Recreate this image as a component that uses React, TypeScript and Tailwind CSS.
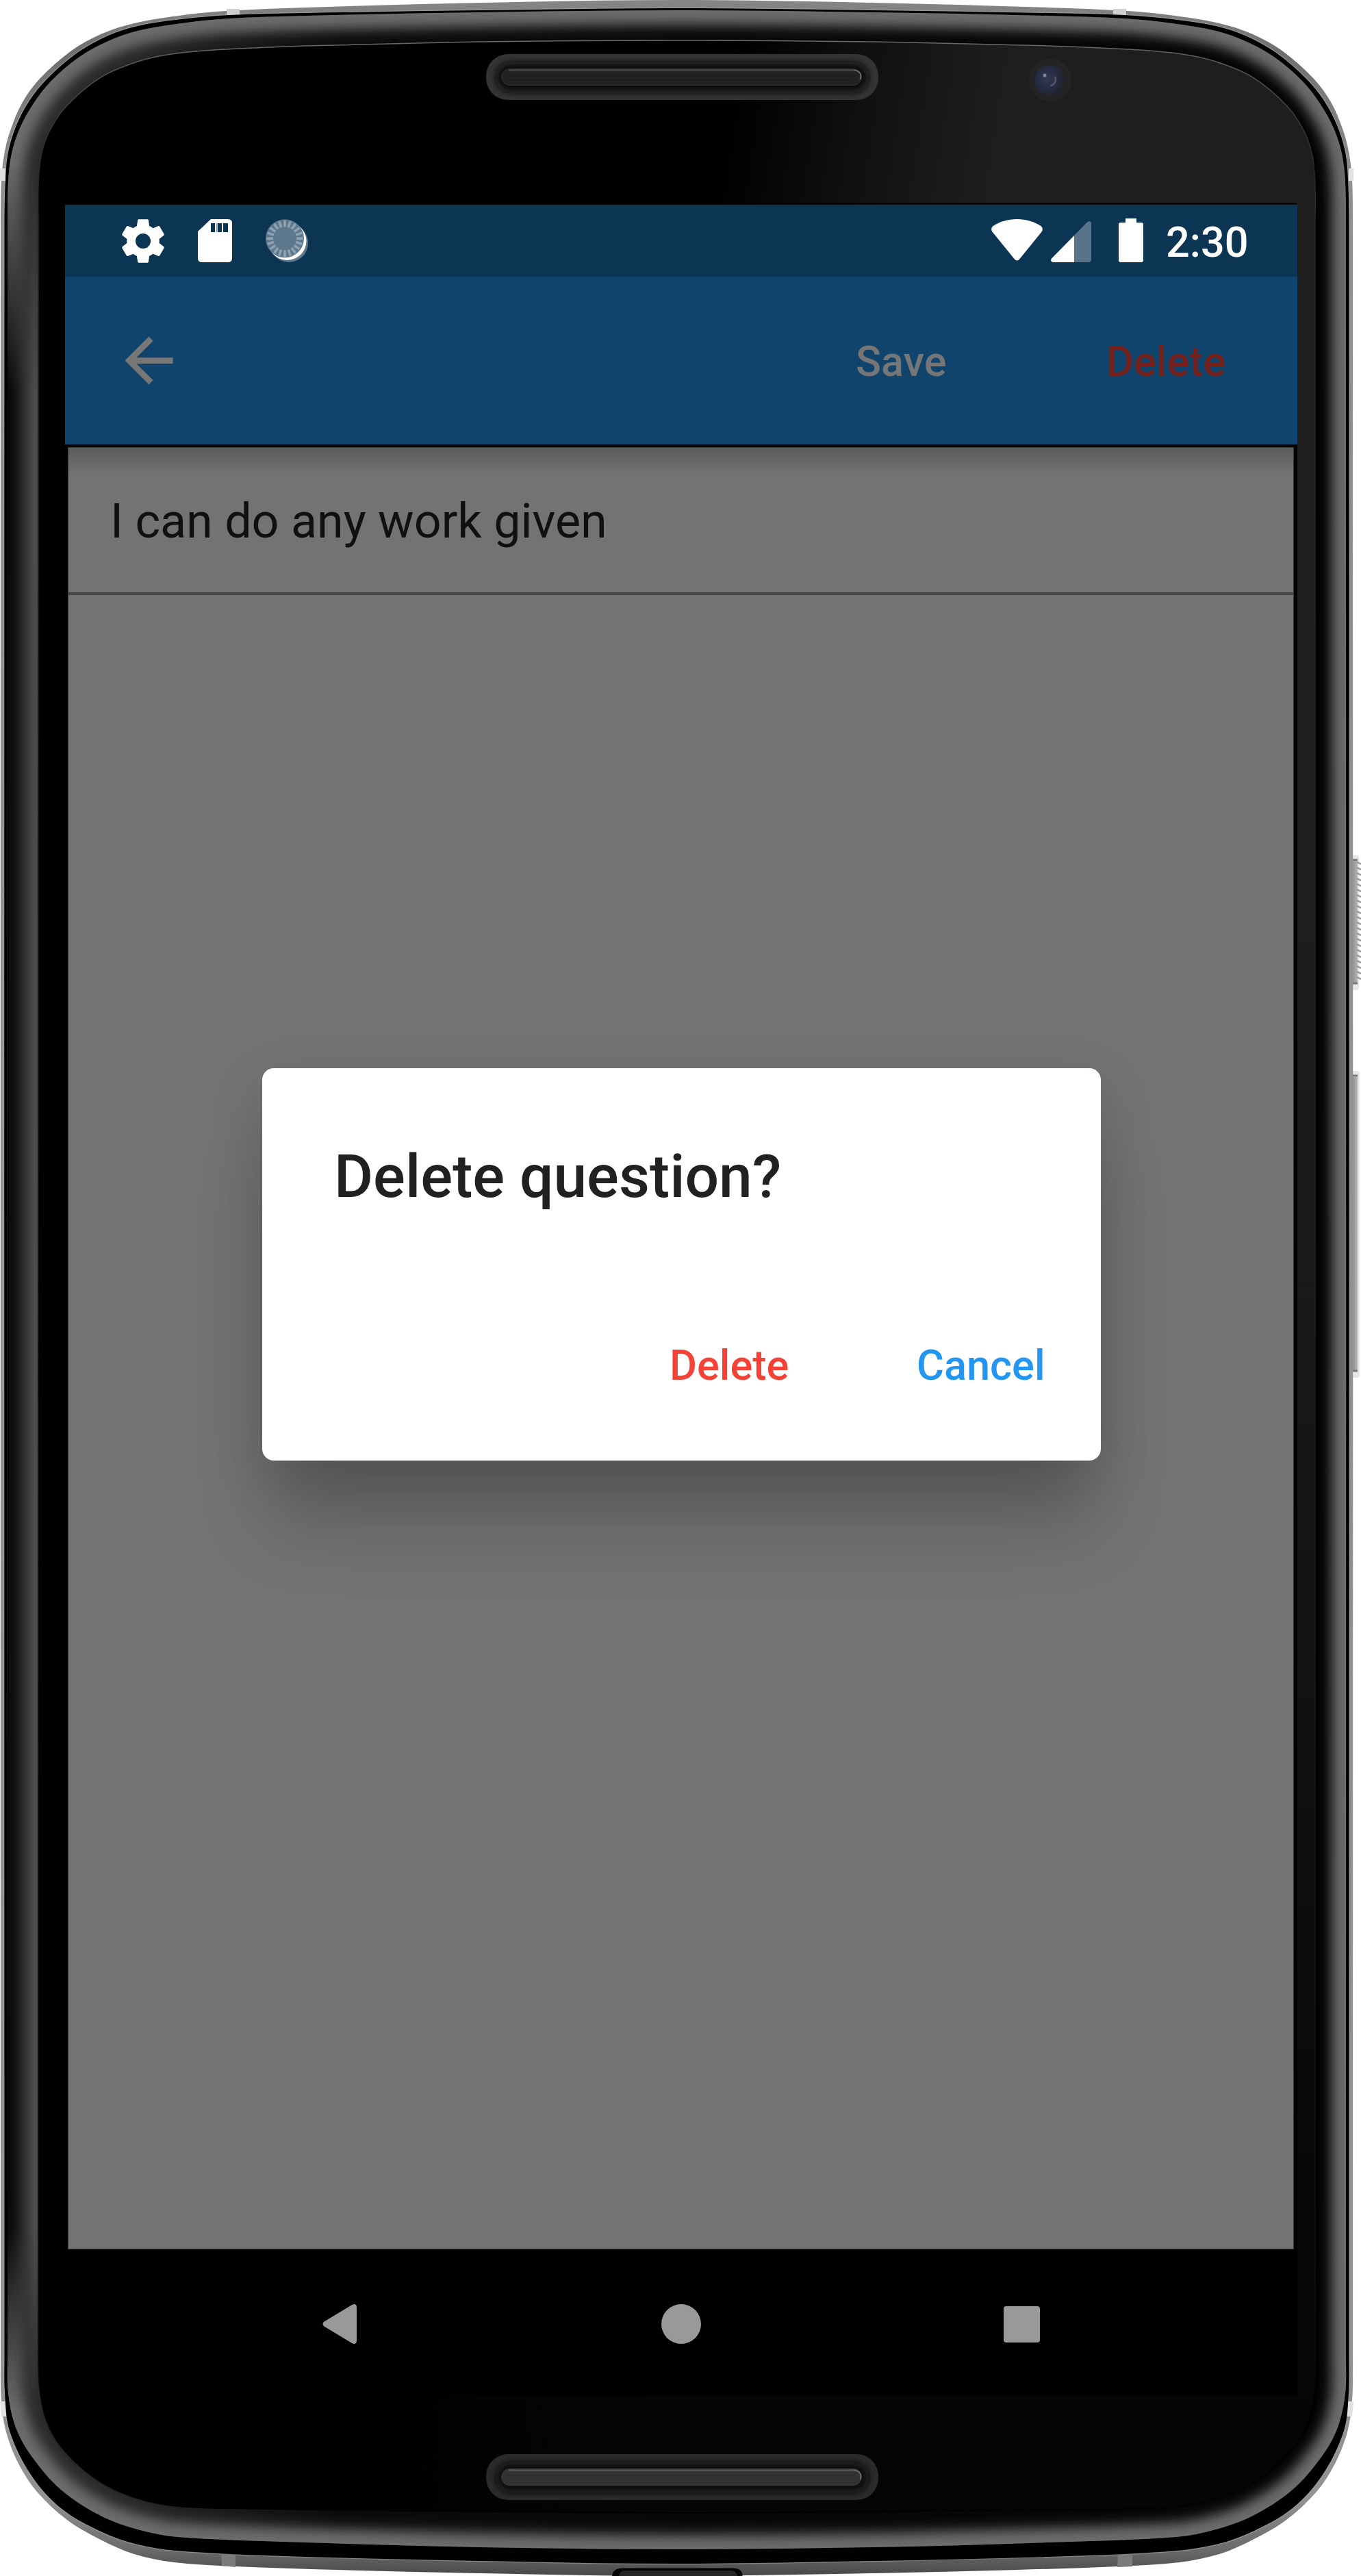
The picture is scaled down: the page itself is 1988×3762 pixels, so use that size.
import React from 'react';

type Point = [number, number];

const CENTER = 988.5;

/** Mirrors the left-hand contour around the device axis and joins it with a smooth closed curve. */
function contour(left: Point[]): string {
  const right = left
    .filter(([x]) => x !== CENTER)
    .map(([x, y]): Point => [2 * CENTER - x, y])
    .reverse();
  const pts = [...left, ...right];
  const n = pts.length;
  let d = `M${pts[0][0]} ${pts[0][1]}`;
  for (let i = 0; i < n; i++) {
    const p0 = pts[(i - 1 + n) % n];
    const p1 = pts[i];
    const p2 = pts[(i + 1) % n];
    const p3 = pts[(i + 2) % n];
    const len = Math.hypot(p2[0] - p1[0], p2[1] - p1[1]);
    const a = Math.hypot(p2[0] - p0[0], p2[1] - p0[1]) || 1;
    const b = Math.hypot(p3[0] - p1[0], p3[1] - p1[1]) || 1;
    const c1x = p1[0] + ((p2[0] - p0[0]) / a) * (len / 3);
    const c1y = p1[1] + ((p2[1] - p0[1]) / a) * (len / 3);
    const c2x = p2[0] - ((p3[0] - p1[0]) / b) * (len / 3);
    const c2y = p2[1] - ((p3[1] - p1[1]) / b) * (len / 3);
    d += `C${c1x.toFixed(1)} ${c1y.toFixed(1)} ${c2x.toFixed(1)} ${c2y.toFixed(1)} ${p2[0]} ${p2[1]}`;
  }
  return d + 'Z';
}

const SHELL = contour([
  [CENTER, 0], [700, 4], [446, 11], [330, 16], [268, 22], [196, 34], [147, 50], [103, 75], [58, 115],
  [33, 149], [16, 188], [7, 221], [2, 262], [1, 330], [1, 3440], [2, 3507], [9, 3552], [27, 3598],
  [54, 3639], [98, 3680], [147, 3709], [196, 3730], [254, 3742], [344, 3748], [491, 3753], [700, 3758], [CENTER, 3762],
]);

const RIM = contour([
  [CENTER, 12], [700, 15], [446, 19], [335, 22], [265, 28], [201, 38], [158, 52], [113, 77], [69, 115],
  [43, 147], [24, 183], [12, 222], [8, 262], [6.5, 330], [6.5, 3440], [7, 3495], [14, 3550], [45, 3614],
  [89, 3663], [147, 3697], [201, 3716], [268, 3726], [446, 3734], [700, 3740], [CENTER, 3744],
]);

const BAND = contour([
  [CENTER, 15], [700, 18], [446, 23], [335, 27], [265, 34], [201, 45], [158, 60], [116, 83], [75, 118],
  [49, 151], [29, 187], [17, 224], [12, 265], [11, 330], [11, 3440], [12, 3495], [23, 3545], [46, 3587],
  [89, 3636], [147, 3674], [201, 3694], [259, 3705], [446, 3713], [700, 3720], [CENTER, 3723],
]);

const GLASS = contour([
  [CENTER, 59], [700, 61], [446, 67], [312, 73], [250, 79], [201, 90], [147, 113], [96, 156], [71, 194],
  [60, 228], [56, 270], [56, 330], [56, 3440], [58, 3490], [67, 3533], [89, 3573], [134, 3616], [179, 3641],
  [241, 3658], [312, 3663], [700, 3668], [CENTER, 3670],
]);

function SpeakerSlot({ y, bright }: { y: number; bright?: boolean }) {
  return (
    <g transform={`translate(710 ${y})`}>
      <rect width="573" height="67" rx="32" fill={bright ? '#2b2b2b' : '#343434'} />
      <rect x="14" y="12" width="545" height="44" rx="22" fill="#080808" filter="url(#soft6)" />
      <rect x="22.5" y="21.5" width="526" height="24" rx="12" fill={bright ? '#323232' : '#222'} stroke={bright ? '#3c3c3c' : '#333'} />
      <path d="M33 23.5H538" stroke={bright ? '#5a5a5a' : '#4c4c4c'} strokeWidth="2" />
      <path d="M538 23.5C547 25 549 31 546 37" stroke="#777" strokeWidth="1.5" fill="none" />
      <path d="M30 31H540M34 38H536" stroke={bright ? '#2a2a2a' : '#1b1b1b'} />
    </g>
  );
}

function SideKey({ y, height, ridged }: { y: number; height: number; ridged?: boolean }) {
  const ridges = ridged ? Array.from({ length: Math.floor((height - 16) / 8) }, (_, i) => y + 10 + i * 8) : [];
  return (
    <g>
      <rect x="1970" y={y} width={ridged ? 15 : 16} height={height} rx="4" fill="#e6e6e6" />
      <rect x="1974" y={y + 9} width="9" height={height - 20} fill="url(#key)" />
      <path d={`M1976 ${y + 7}h7M1976 ${y + height - 10}h7`} stroke="#777" strokeWidth="3" />
      {ridges.map((ry) => (
        <path key={ry} d={`M1982 ${ry}l6 3`} stroke="#9c9c9c" strokeWidth="2.5" />
      ))}
    </g>
  );
}

function Chassis() {
  return (
    <svg className="col-start-1 row-start-1" width="1988" height="3762" viewBox="0 0 1988 3762" fill="none" aria-hidden="true">
      <defs>
        <filter id="soft6" x="-20%" y="-50%" width="140%" height="200%"><feGaussianBlur stdDeviation="5" /></filter>
        <filter id="soft14" filterUnits="userSpaceOnUse" x="-60" y="-60" width="2108" height="3882"><feGaussianBlur stdDeviation="9" /></filter>
        <filter id="soft20" filterUnits="userSpaceOnUse" x="-60" y="-60" width="2108" height="3882"><feGaussianBlur stdDeviation="16" /></filter>
        <clipPath id="bandClip"><path d={BAND} /></clipPath>
        <linearGradient id="metal" x1="0" y1="0" x2="0" y2="1">
          <stop offset="0" stopColor="#858785" /><stop offset=".02" stopColor="#6f6f6f" />
          <stop offset=".07" stopColor="#8e918f" /><stop offset=".97" stopColor="#929292" />
          <stop offset=".99" stopColor="#6a6a6a" /><stop offset="1" stopColor="#484848" />
        </linearGradient>
        <linearGradient id="key"><stop stopColor="#858585" /><stop offset="1" stopColor="#b8b8b8" /></linearGradient>
        <linearGradient id="leftSide" gradientUnits="userSpaceOnUse" x1="11" y1="0" x2="56" y2="0">
          <stop stopColor="#070707" /><stop offset=".25" stopColor="#141414" /><stop offset=".88" stopColor="#4d4d4d" /><stop offset="1" stopColor="#454545" />
        </linearGradient>
        <linearGradient id="sideFade" gradientUnits="userSpaceOnUse" x1="0" y1="240" x2="0" y2="3520">
          <stop stopColor="#fff" stopOpacity="0" /><stop offset=".1" stopColor="#fff" /><stop offset=".92" stopColor="#fff" /><stop offset="1" stopColor="#fff" stopOpacity="0" />
        </linearGradient>
        <mask id="sideMask" maskUnits="userSpaceOnUse" x="0" y="200" width="100" height="3400"><rect y="200" width="100" height="3400" fill="url(#sideFade)" /></mask>
        <linearGradient id="bandBase" gradientUnits="userSpaceOnUse" x1="0" y1="0" x2="1977" y2="0">
          <stop stopColor="#2c2c2c" /><stop offset=".1" stopColor="#272727" /><stop offset=".25" stopColor="#0b0b0b" /><stop offset=".9" stopColor="#040404" /><stop offset="1" stopColor="#000" />
        </linearGradient>
        <linearGradient id="sheenX" gradientUnits="userSpaceOnUse" x1="1090" y1="0" x2="1480" y2="60">
          <stop stopColor="#000" /><stop offset=".5" stopColor="#111" /><stop offset="1" stopColor="#1e1e1e" />
        </linearGradient>
        <linearGradient id="sheenY" x1="0" y1="0" x2="0" y2="1">
          <stop stopColor="#000" stopOpacity="0" /><stop offset=".35" stopColor="#000" stopOpacity="0" /><stop offset=".6" stopColor="#000" stopOpacity=".3" /><stop offset=".88" stopColor="#000" stopOpacity=".76" /><stop offset="1" stopColor="#000" stopOpacity=".85" />
        </linearGradient>
        <linearGradient id="edge" gradientUnits="userSpaceOnUse" x1="0" y1="60" x2="0" y2="3670">
          <stop stopColor="#6a6a6a" /><stop offset=".015" stopColor="#4c4c4c" /><stop offset=".05" stopColor="#2a2a2a" /><stop offset=".9" stopColor="#111" /><stop offset="1" stopColor="#000" />
        </linearGradient>
        <radialGradient id="lens" cx=".42" cy=".42" r=".6">
          <stop stopColor="#34384e" /><stop offset=".55" stopColor="#272c45" /><stop offset="1" stopColor="#212229" />
        </radialGradient>
      </defs>

      <SideKey y={1249} height={197} ridged />
      <SideKey y={1564} height={448} />

      <path d={SHELL} fill="url(#metal)" />
      <path d={RIM} stroke="#a8a8a8" strokeOpacity=".55" strokeWidth="2.5" />
      <path d="M331 13h19v16h-19zM1626 13h19v16h-19z" fill="#cfcfcf" />
      <path d="M0 246h8v18H0zM1970 246h7v18h-7z" fill="#e2e2e2" />
      <path d="M0 3507h8l2 22H2zM1977 3507h-8l-2 22h8z" fill="#e2e2e2" />
      <path d="M323 3728l21 1v20l-20-2zM1633 3729l21-1v20l-22 1z" fill="#7b7b7b" />
      <path d={RIM} fill="#000" />
      <g clipPath="url(#bandClip)">
        <path d={BAND} fill="url(#bandBase)" />
        <path d={BAND} stroke="#777" strokeWidth="38" filter="url(#soft14)" />
        <path d={BAND} stroke="#555" strokeOpacity=".45" strokeWidth="30" filter="url(#soft20)" />
        <rect x="8" y="230" width="50" height="3300" fill="url(#leftSide)" mask="url(#sideMask)" />
      </g>
      <path d={GLASS} fill="url(#sheenX)" />
      <path d={GLASS} fill="url(#sheenY)" />
      <path d={GLASS} stroke="url(#edge)" strokeWidth="1.5" />

      <SpeakerSlot y={79} />
      <SpeakerSlot y={3584} bright />

      <circle cx="1534" cy="117" r="31" fill="#242424" />
      <ellipse cx="1533" cy="118" rx="22" ry="23" fill="url(#lens)" />
      <path d="M1541 112a9 9 0 0 1-7 13" stroke="#53566a" strokeWidth="2.5" />
      <circle cx="1526" cy="110" r="2.5" fill="#7789a3" />

      <path d="M894 3762C895 3754 900 3750.500 910 3750.500H1070C1080 3750.500 1084 3754 1084.500 3762Z" fill="#050505" />
      <path d="M904 3762q1-8 8-8H1067q9 0 10 8Z" fill="#252525" />
      <path d="M95 297.500H1894" stroke="#000" strokeWidth="2" />
    </svg>
  );
}

function GearIcon() {
  return (
    <svg width="76" height="76" viewBox="0 0 24 24" fill="#fff">
      <path d="M19.430 12.980c.04-.32.07-.64.07-.98s-.03-.66-.07-.98l2.110-1.650c.19-.15.24-.42.12-.64l-2-3.460c-.12-.22-.39-.3-.61-.22l-2.490 1c-.52-.4-1.080-.73-1.690-.98l-.38-2.650C14.460 2.180 14.250 2 14 2h-4c-.25 0-.46.18-.49.42l-.38 2.650c-.61.25-1.170.59-1.690.98l-2.490-1c-.23-.09-.49 0-.61.22l-2 3.460c-.13.22-.07.49.12.64l2.110 1.650c-.04.32-.07.65-.07.98s.03.66.07.98l-2.110 1.650c-.19.15-.24.42-.12.64l2 3.460c.12.22.39.3.61.22l2.490-1c.52.4 1.080.73 1.690.98l.38 2.650c.03.24.24.42.49.42h4c.25 0 .46-.18.49-.42l.38-2.650c.61-.25 1.170-.59 1.690-.98l2.490 1c.23.09.49 0 .61-.22l2-3.460c.12-.22.07-.49-.12-.64l-2.110-1.650zM12 15.500c-1.930 0-3.500-1.570-3.500-3.500s1.570-3.500 3.500-3.500 3.500 1.570 3.500 3.500-1.570 3.500-3.500 3.500z" />
    </svg>
  );
}

function SdCardIcon() {
  return (
    <svg width="50" height="63" viewBox="0 0 50 63">
      <path d="M19 0H44q6 0 6 6V57q0 6-6 6H6q-6 0-6-6V18z" fill="#fff" />
      <path d="M19 6h6v13h-6zM29 6h6v13h-6zM37 6h7v13h-7z" fill="#0c3453" />
      <path d="M27 6h1.500v13H27z" fill="#7d93a3" />
    </svg>
  );
}

function SyncIcon() {
  const ticks = Array.from({ length: 20 }, (_, i) => i * 18);
  return (
    <svg width="63" height="64" viewBox="0 0 63 64">
      <circle cx="34" cy="35" r="28" fill="#5d788d" />
      <circle cx="31.500" cy="32" r="28" fill="#fff" />
      <circle cx="28" cy="28.300" r="28" fill="#5d788d" />
      {ticks.map((deg) => (
        <path key={deg} d="M45 28.300H54.500" stroke="#8fa2b1" strokeWidth="3.600" transform={`rotate(${deg} 28 28.300)`} />
      ))}
    </svg>
  );
}

function StatusBar() {
  return (
    <div className="flex h-[105px] bg-[#0c3453] text-white">
      <div className="flex pl-[76px] pt-[15px]">
        <GearIcon />
        <div className="ml-[42px] mt-[6px]"><SdCardIcon /></div>
        <div className="ml-[49px] mt-[6px]"><SyncIcon /></div>
      </div>
      <div className="ml-auto flex pt-[20px]">
        <svg width="75" height="61" viewBox="0 0 75 61" className="mt-px">
          <path d="M2 10.500C22 -3.500 53 -3.500 73 10.500Q76 13.500 74 18L41.500 58Q37.500 63 33.500 58L1 18Q-1 13.500 2 10.500Z" fill="#fff" />
        </svg>
        <svg width="59" height="60" viewBox="0 0 59 60" className="ml-[12px] mt-[4px]">
          <path d="M34 21L53 1.500Q59 -2 59 4V56Q59 60 55 60H34Z" fill="#59748a" />
          <path d="M34 21V60H3Q-1.500 59 1 54.500Z" fill="#fff" />
        </svg>
        <svg width="36" height="64" viewBox="0 0 36 64" className="ml-[40px]">
          <path d="M10 0H26V6H33q3 0 3 3V61q0 3-3 3H3q-3 0-3-3V9q0-3 3-3h7z" fill="#fff" />
        </svg>
        <span className="ml-[33px] w-[192px] text-[61.250px] font-medium leading-[70px]">2:30</span>
      </div>
    </div>
  );
}

function AppBar() {
  return (
    <header className="flex h-[245px] items-center bg-[#10446d] text-[61.250px] font-medium leading-[72px]">
      <svg width="105" height="105" viewBox="0 0 24 24" fill="#777" className="ml-[70px]">
        <path d="M20 11H7.830l5.590-5.590L12 4l-8 8 8 8 1.410-1.410L7.830 13H20v-2z" />
      </svg>
      <button className="ml-auto w-[366px] pt-[2px] text-left text-[#767676]">Save</button>
      <button className="w-[279px] pt-[2px] text-left text-[#731f1a]">Delete</button>
    </header>
  );
}

function NavigationBar() {
  return (
    <nav className="flex h-[214px] bg-black pt-[80px]">
      <svg width="50" height="58" viewBox="0 0 50 58" fill="#999" className="ml-[376px]">
        <path d="M43 1Q50 -2 50 5V53Q50 60 43 57L2.500 32.500Q-1.500 29 2.500 25.500Z" />
      </svg>
      <div className="ml-[445px] h-[58px] w-[58px] rounded-full bg-[#999]" />
      <div className="ml-[442px] mt-[3px] h-[53px] w-[53px] rounded-[4px] bg-[#999]" />
    </nav>
  );
}

function DeleteDialog() {
  return (
    <div
      role="dialog"
      className="absolute left-[288px] top-[1261px] flex h-[573px] w-[1225px] flex-col rounded-[17px] bg-white pl-[105px] pt-[108px] shadow-[0_105px_110px_-15px_rgba(0,0,0,0.2),0_25px_80px_rgba(0,0,0,0.12)]"
    >
      <h2 className="text-[87.500px] font-medium leading-[100px] text-[#212121]">Delete question?</h2>
      <div className="mt-[190px] flex justify-end text-[61.250px] font-medium leading-[72px]">
        <button className="w-[361px] text-left text-[#f44336]">Delete</button>
        <button className="w-[269px] text-left text-[#2196f3]">Cancel</button>
      </div>
    </div>
  );
}

export default function App() {
  return (
    <div className="grid h-[3762px] w-[1988px] overflow-hidden bg-white font-['Roboto',sans-serif]">
      <Chassis />
      <main className="relative col-start-1 row-start-1 ml-[95px] mt-[299px] flex h-[3200px] w-[1800px] flex-col bg-black">
        <StatusBar />
        <AppBar />
        <section className="ml-[4px] mr-[5px] mt-[4px] h-[2632px] border border-[#3a3a3a] bg-[#737373]">
          <div className="h-[215px] border-b-[4px] border-[#464646] bg-linear-to-b from-[#5c5c5c] to-[#737373] to-[38px] pl-[61px] pt-[66px]">
            <p className="text-[70px] leading-[82px] text-[#101010]">I can do any work given</p>
          </div>
        </section>
        <NavigationBar />
        <DeleteDialog />
      </main>
    </div>
  );
}
